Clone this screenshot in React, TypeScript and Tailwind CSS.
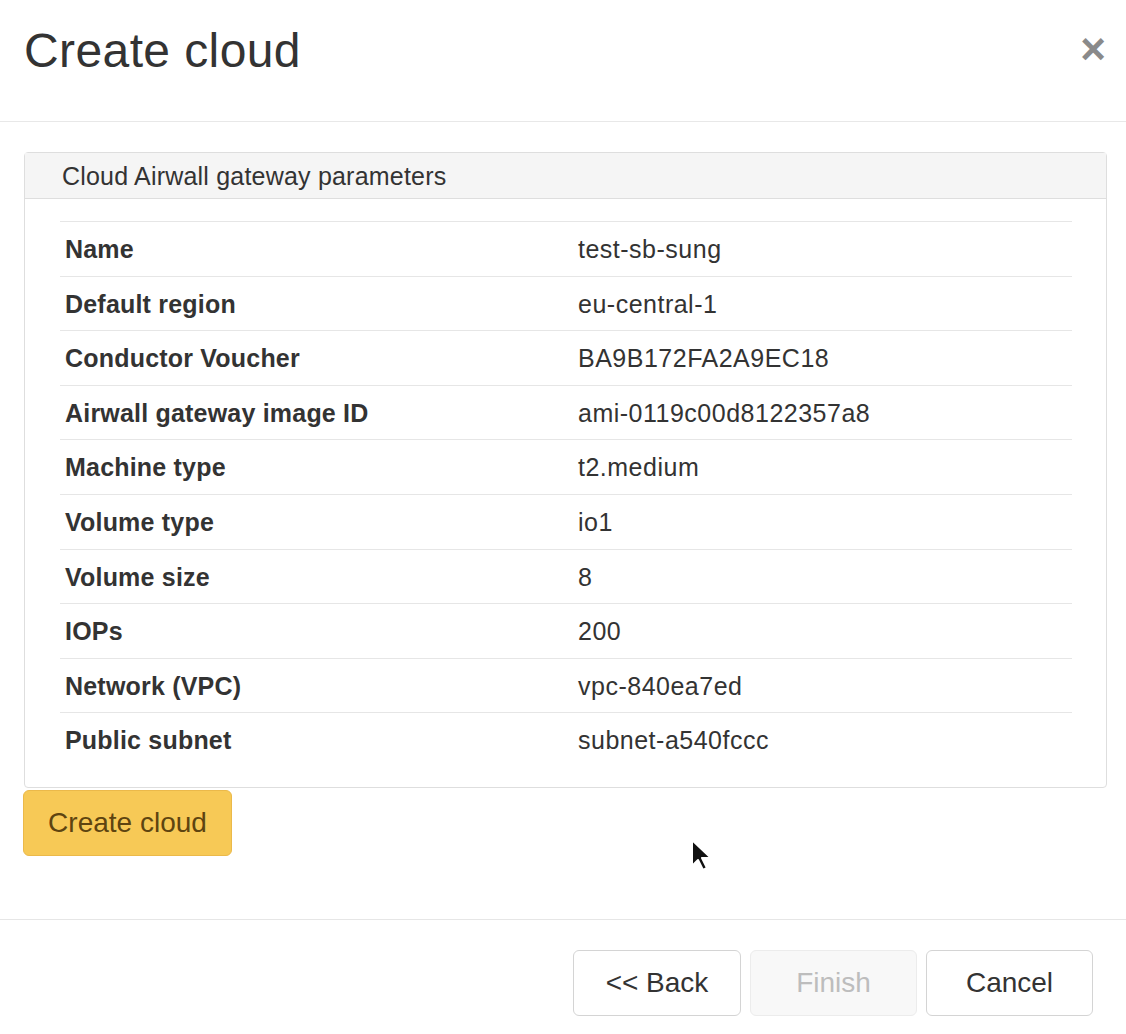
import React from 'react'

const rows: [string, string][] = [
  ['Name', 'test-sb-sung'],
  ['Default region', 'eu-central-1'],
  ['Conductor Voucher', 'BA9B172FA2A9EC18'],
  ['Airwall gateway image ID', 'ami-0119c00d8122357a8'],
  ['Machine type', 't2.medium'],
  ['Volume type', 'io1'],
  ['Volume size', '8'],
  ['IOPs', '200'],
  ['Network (VPC)', 'vpc-840ea7ed'],
  ['Public subnet', 'subnet-a540fccc'],
]

function Cursor() {
  return (
    <svg className="absolute left-[690px] top-[838px]" width="24" height="34" viewBox="0 0 12 17">
      <path d="M1 1 L1 14 L4 11 L6.5 16 L8.5 15 L6 10 L10.5 10 Z" fill="#111" stroke="#fff" strokeWidth="1" strokeLinejoin="round" />
    </svg>
  )
}

export default function App() {
  return (
    <div
      className="relative w-full h-[1034px] bg-white overflow-hidden text-[#333]"
      style={{ fontFamily: '"Liberation Sans", Arial, sans-serif' }}
    >
      {/* Header */}
      <div className="h-[122px] flex items-center justify-between pl-[24px] pr-[20px] pb-[20px] border-b border-[#e8e8e8]">
        <h1 className="text-[48px] leading-none font-normal tracking-[0.4px] text-[#333]">Create cloud</h1>
        <span className="text-[44px] leading-none font-bold text-[#8a8a8a] mt-[-4px]">×</span>
      </div>

      {/* Body */}
      <div className="pt-[30px] pl-[24px] pr-[19px]">
        <div className="border border-[#dedede] rounded-[4px]">
          <div className="h-[46px] flex items-center pl-[37px] pt-[2px] bg-[#f5f5f5] border-b border-[#dedede] text-[25px] tracking-[0.2px]">
            Cloud Airwall gateway parameters
          </div>
          <div className="pt-[22px] pb-[20px] pl-[35px] pr-[34px]">
            {rows.map(([k, v]) => (
              <div key={k} className="h-[54.6px] flex items-center pt-[2px] border-t border-[#e6e6e6] text-[25px]">
                <div className="w-[518px] pl-[5px] font-bold tracking-[0.2px]">{k}</div>
                <div className="tracking-[0.5px]">{v}</div>
              </div>
            ))}
          </div>
        </div>
        <button className="mt-[2px] -ml-[1px] w-[209px] h-[66px] rounded-[6px] bg-[#f7c956] border border-[#ebb94a] text-[28px] text-[#5e4410]">
          Create cloud
        </button>
      </div>

      {/* Footer */}
      <div className="mt-[63px] border-t border-[#e6e6e6] flex justify-end gap-[9px] pt-[30px] pr-[33px]">
        <button className="w-[168px] h-[66px] rounded-[6px] bg-white border border-[#d4d4d4] text-[28px] text-[#333]">
          &lt;&lt; Back
        </button>
        <button className="w-[167px] h-[66px] rounded-[6px] bg-[#f8f8f8] border border-[#ececec] text-[28px] text-[#bdbdbd]">
          Finish
        </button>
        <button className="w-[167px] h-[66px] rounded-[6px] bg-white border border-[#d4d4d4] text-[28px] text-[#333]">
          Cancel
        </button>
      </div>

      <Cursor />
    </div>
  )
}
